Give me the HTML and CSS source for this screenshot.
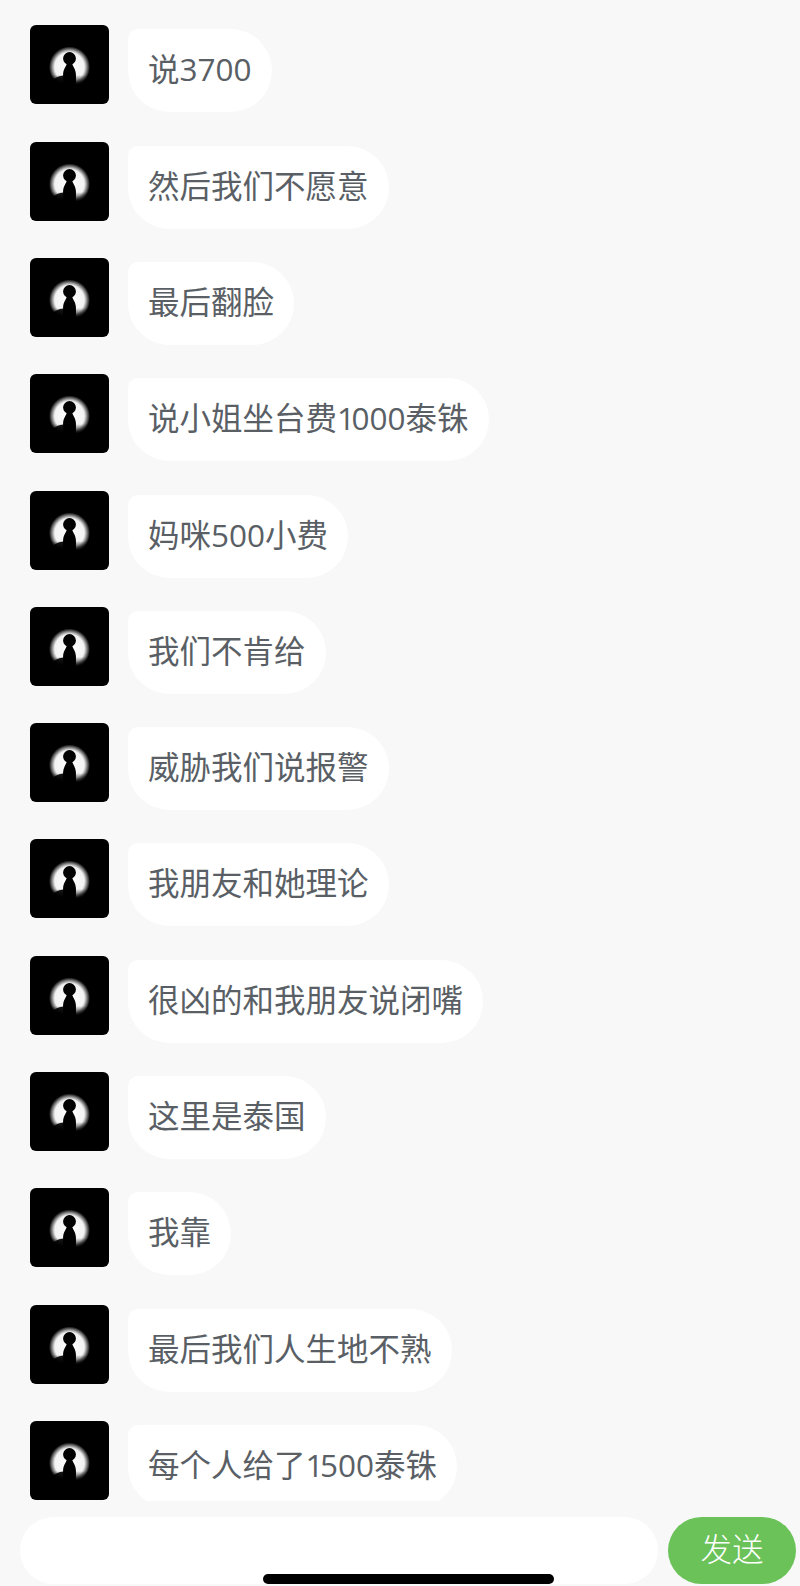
FILE: index.html
```html
<!DOCTYPE html>
<html lang="zh">
<head>
    <meta charset="UTF-8">
    <meta name="viewport" content="width=device-width, initial-scale=1.0">
    <title>聊天</title>
    <link rel="stylesheet" href="styles.css">
</head>
<body>
    <svg class="defs" width="0" height="0">
        <defs>
            <radialGradient id="moon-glow">
                <stop offset="0" stop-color="#fff"/>
                <stop offset="0.72" stop-color="#f2f2f2"/>
                <stop offset="0.82" stop-color="#a0a0a0"/>
                <stop offset="1" stop-color="#000"/>
            </radialGradient>
            <linearGradient id="ground-fade" x1="0" y1="0" x2="0" y2="1">
                <stop offset="0" stop-color="#000" stop-opacity="0"/>
                <stop offset="0.6" stop-color="#000" stop-opacity="1"/>
            </linearGradient>
            <symbol id="avatar-pic" viewBox="0 0 79 79">
                <rect width="79" height="79" rx="6" fill="#000"/>
                <circle cx="39.5" cy="42" r="20.500" fill="url(#moon-glow)"/>
                <rect x="18" y="50" width="43" height="16" fill="url(#ground-fade)"/>
                <circle cx="39.5" cy="33.5" r="6.4" fill="#000"/>
                <path d="M37 38h5c.5 3 3.600 6 3.900 11 .3 8-.4 15-.4 25H33.500c0-10-.7-17-.4-25 .3-5 3.400-8 3.900-11z" fill="#000"/>
                <path d="M23 55c2.500-2.500 5.500-4 10.500-4.500V64H23z" fill="#000" opacity="0.9"/>
            </symbol>
        </defs>
    </svg>

    <div id="chat-container">
        <div class="message-list">
            <div class="message">
                <svg class="avatar"><use href="#avatar-pic"/></svg>
                <div class="bubble">说3700</div>
            </div>
            <div class="message">
                <svg class="avatar"><use href="#avatar-pic"/></svg>
                <div class="bubble">然后我们不愿意</div>
            </div>
            <div class="message">
                <svg class="avatar"><use href="#avatar-pic"/></svg>
                <div class="bubble">最后翻脸</div>
            </div>
            <div class="message">
                <svg class="avatar"><use href="#avatar-pic"/></svg>
                <div class="bubble">说小姐坐台费<span class="digit-one">1</span>000泰铢</div>
            </div>
            <div class="message">
                <svg class="avatar"><use href="#avatar-pic"/></svg>
                <div class="bubble">妈咪500小费</div>
            </div>
            <div class="message">
                <svg class="avatar"><use href="#avatar-pic"/></svg>
                <div class="bubble">我们不肯给</div>
            </div>
            <div class="message">
                <svg class="avatar"><use href="#avatar-pic"/></svg>
                <div class="bubble">威胁我们说报警</div>
            </div>
            <div class="message">
                <svg class="avatar"><use href="#avatar-pic"/></svg>
                <div class="bubble">我朋友和她理论</div>
            </div>
            <div class="message">
                <svg class="avatar"><use href="#avatar-pic"/></svg>
                <div class="bubble">很凶的和我朋友说闭嘴</div>
            </div>
            <div class="message">
                <svg class="avatar"><use href="#avatar-pic"/></svg>
                <div class="bubble">这里是泰国</div>
            </div>
            <div class="message">
                <svg class="avatar"><use href="#avatar-pic"/></svg>
                <div class="bubble">我靠</div>
            </div>
            <div class="message">
                <svg class="avatar"><use href="#avatar-pic"/></svg>
                <div class="bubble">最后我们人生地不熟</div>
            </div>
            <div class="message">
                <svg class="avatar"><use href="#avatar-pic"/></svg>
                <div class="bubble">每个人给了<span class="digit-one">1</span>500泰铢</div>
            </div>
        </div>

        <div class="input-bar">
            <div class="text-input"></div>
            <button class="send-btn">发送</button>
        </div>
        <div class="home-bar"></div>
    </div>
</body>
</html>
```

FILE: styles.css
```css
html, body {
    margin: 0;
    padding: 0;
}
body {
    background-color: #F8F8F8;
    font-family: 'Open Sans', 'Noto Sans CJK SC', sans-serif;
}
.defs {
    display: block;
    height: 0;
}
#chat-container {
    position: relative;
    width: 800px;
    height: 1586px;
    overflow: hidden;
}
.message-list {
    height: 1501px;
    padding: 25.4px 0 0 29.5px;
    box-sizing: border-box;
    overflow: hidden;
}
.message {
    display: flex;
    align-items: flex-start;
    gap: 19px;
    height: 87px;
    margin-bottom: 29.3px;
}
.avatar {
    width: 79px;
    height: 79px;
    flex-shrink: 0;
}
.bubble {
    margin-top: 4px;
    height: 83px;
    line-height: 79px;
    padding: 0 20px 0 20.5px;
    background-color: #FFF;
    border-radius: 10px 42px 42px 42px;
    color: #5A5F66;
    font-size: 31.5px;
    white-space: nowrap;
}
.digit-one {
    letter-spacing: -3.5px;
}
.input-bar {
    display: flex;
    gap: 10px;
    padding: 16px 4px 0 19.5px;
}
.text-input {
    flex: 1;
    height: 67px;
    background-color: #FFF;
    border-radius: 34px;
}
.send-btn {
    width: 128px;
    height: 67px;
    border: none;
    padding: 0 0 7px;
    border-radius: 34px;
    background-color: #6AC259;
    color: #FFF;
    font-family: inherit;
    font-size: 31.5px;
    font-weight: 300;
}
.home-bar {
    position: absolute;
    left: 263px;
    top: 1574px;
    width: 291px;
    height: 10px;
    border-radius: 5px;
    background-color: #000;
}
```
